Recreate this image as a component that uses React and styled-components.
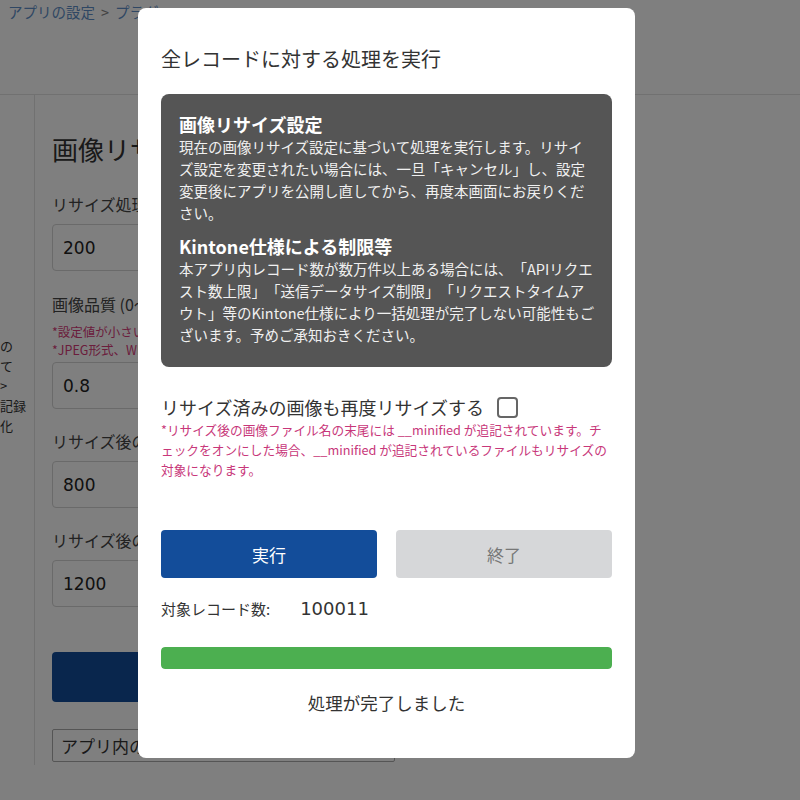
import React from 'react'
import styled, { createGlobalStyle } from 'styled-components'

const GlobalStyle = createGlobalStyle`
  body {
    margin: 0;
    font-family: "Noto Sans CJK JP", "Noto Sans", sans-serif;
    color: #333;
  }
  * {
    text-spacing-trim: space-all;
  }
`

const Page = styled.div`
  width: 800px;
  min-height: 800px;
  background: #fff;
  overflow: hidden;
`

const Header = styled.div`
  height: 95px;
  box-sizing: border-box;
  padding: 0 8px;
  border-bottom: 1px solid #e3e3e3;
`

const Breadcrumb = styled.div`
  font-size: 14.5px;
  line-height: 24px;
  color: #5f8fc8;
  white-space: nowrap;
  > span {
    color: #888;
    margin: 0 6px;
  }
`

const Body = styled.div`
  display: flex;
`

const Sidebar = styled.div`
  width: 35px;
  flex-shrink: 0;
  box-sizing: border-box;
  padding-top: 241px;
  min-height: 670px;
  border-right: 1px solid #e3e3e3;
  overflow: hidden;
  font-size: 13px;
  line-height: 20px;
  white-space: nowrap;
`

const Main = styled.div`
  width: 360px;
  padding: 36px 0 0 17px;
`

/* the modal hides everything right of x=138, so texts are clipped there */
const Clip = styled.div`
  width: 90px;
  overflow: hidden;
  white-space: nowrap;
`

const PageTitle = styled(Clip)`
  font-size: 26px;
  line-height: 36px;
`

const FieldLabel = styled(Clip)`
  margin-top: ${p => p.$gap}px;
  font-size: 16px;
  line-height: 24px;
  color: #444;
`

const PageNote = styled(Clip)`
  margin-top: ${p => p.$gap || 0}px;
  font-size: 12.5px;
  line-height: 18px;
  color: #d63a78;
`

const Input = styled.div`
  margin-top: ${p => p.$gap}px;
  height: 47px;
  width: 340px;
  box-sizing: border-box;
  border: 1px solid #d4d4d4;
  border-radius: 4px;
  padding-left: 10px;
  display: flex;
  align-items: center;
  font-family: "DejaVu Sans", sans-serif;
  font-size: 17px;
  color: #222;
`

const PageButton = styled.div`
  margin-top: 45px;
  height: 50px;
  width: 340px;
  border-radius: 4px;
  background: #134d9a;
`

const Select = styled.div`
  margin-top: 27px;
  height: 33px;
  width: 343px;
  box-sizing: border-box;
  border: 1px solid #aaa;
  border-radius: 2px;
  padding-left: 8px;
  font-size: 17px;
  line-height: 31px;
  white-space: nowrap;
  > span {
    display: block;
    width: 78px;
    overflow: hidden;
  }
`

const Overlay = styled.div`
  position: fixed;
  inset: 0;
  background: rgba(0, 0, 0, 0.5);
`

const Modal = styled.div`
  margin: 8px 0 0 138px;
  width: 497px;
  height: 750px;
  box-sizing: border-box;
  padding: 36px 23px 0;
  background: #fff;
  border-radius: 8px;
`

const ModalTitle = styled.h2`
  margin: 0;
  font-size: 20px;
  font-weight: normal;
  line-height: 30px;
  color: #333;
`

const InfoBox = styled.div`
  margin-top: 20px;
  background: #555;
  border-radius: 8px;
  padding: 18px 18px 21px;
  color: #f0f0f0;
`

const InfoHeading = styled.h3`
  margin: ${p => (p.$first ? 0 : '10px')} 0 0;
  font-size: 18px;
  line-height: 24px;
  font-weight: bold;
  color: #fff;
`

const InfoText = styled.p`
  margin: 0;
  font-size: 14.5px;
  line-height: 22px;
  white-space: nowrap;
`

const CheckRow = styled.label`
  margin-top: 27px;
  display: flex;
  align-items: center;
  font-size: 18px;
  line-height: 26px;
  color: #333;
`

const CheckBox = styled.span`
  margin-left: 13px;
  width: 17px;
  height: 17px;
  border: 2px solid #666;
  border-radius: 4px;
`

const Note = styled.p`
  margin: 0;
  font-size: 12.7px;
  line-height: 20px;
  color: #c8377a;
  white-space: nowrap;
`

const ButtonRow = styled.div`
  margin-top: 50px;
  display: flex;
  gap: 19px;
`

const Button = styled.button`
  flex: 1;
  height: 48px;
  border: none;
  border-radius: 4px;
  font-family: inherit;
  font-size: 17px;
  background: ${p => (p.$primary ? '#134d9a' : '#d6d7d9')};
  color: ${p => (p.$primary ? '#fff' : '#777')};
`

const Count = styled.div`
  margin-top: 19px;
  font-size: 15px;
  line-height: 24px;
  color: #333;
`

const Num = styled.span`
  margin-left: 30px;
  font-family: "DejaVu Sans", sans-serif;
  font-size: 18px;
`

const Progress = styled.div`
  margin-top: 26px;
  height: 22px;
  border-radius: 4px;
  background: #e8e8e8;
  overflow: hidden;
`

const ProgressFill = styled.div`
  height: 100%;
  background: #4caf50;
  border-radius: 4px;
`

const Done = styled.div`
  margin-top: 21px;
  text-align: center;
  font-size: 17.5px;
  line-height: 26px;
  color: #333;
`

export default function App() {
  const progress = 100

  return (
    <>
      <GlobalStyle />
      <Page>
        <Header>
          <Breadcrumb>
            アプリの設定<span>&gt;</span>プラグ
          </Breadcrumb>
        </Header>
        <Body>
          <Sidebar>
            <div>の</div>
            <div>て</div>
            <div>&gt;</div>
            <div>記録</div>
            <div>化</div>
          </Sidebar>
          <Main>
            <PageTitle>画像リサイズ設定</PageTitle>
            <FieldLabel $gap={25}>リサイズ処理を行うファイルサイズ (KB)</FieldLabel>
            <Input $gap={8}>200</Input>
            <FieldLabel $gap={21}>画像品質 (0〜1)</FieldLabel>
            <PageNote $gap={7}>*設定値が小さいほどファイルサイズは小さくなります</PageNote>
            <PageNote>*JPEG形式、WEBP形式のみ有効です</PageNote>
            <Input $gap={3}>0.8</Input>
            <FieldLabel $gap={20}>リサイズ後の最大幅 (px)</FieldLabel>
            <Input $gap={8}>800</Input>
            <FieldLabel $gap={20}>リサイズ後の最大高さ (px)</FieldLabel>
            <Input $gap={8}>1200</Input>
            <PageButton />
            <Select><span>アプリ内の全レコードに対して実行</span></Select>
          </Main>
        </Body>
      </Page>
      <Overlay>
        <Modal>
          <ModalTitle>全レコードに対する処理を実行</ModalTitle>
          <InfoBox>
            <InfoHeading $first>画像リサイズ設定</InfoHeading>
            <InfoText>
              現在の画像リサイズ設定に基づいて処理を実行します。リサイ<br />
              ズ設定を変更されたい場合には、一旦「キャンセル」し、設定<br />
              変更後にアプリを公開し直してから、再度本画面にお戻りくだ<br />
              さい。
            </InfoText>
            <InfoHeading>Kintone仕様による制限等</InfoHeading>
            <InfoText>
              本アプリ内レコード数が数万件以上ある場合には、「APIリクエ<br />
              スト数上限」「送信データサイズ制限」「リクエストタイムア<br />
              ウト」等のKintone仕様により一括処理が完了しない可能性もご<br />
              ざいます。予めご承知おきください。
            </InfoText>
          </InfoBox>
          <CheckRow>
            リサイズ済みの画像も再度リサイズする
            <CheckBox />
          </CheckRow>
          <Note>
            *リサイズ後の画像ファイル名の末尾には __minified が追記されています。チ<br />
            ェックをオンにした場合、__minified が追記されているファイルもリサイズの<br />
            対象になります。
          </Note>
          <ButtonRow>
            <Button $primary>実行</Button>
            <Button>終了</Button>
          </ButtonRow>
          <Count>
            対象レコード数:<Num>100011</Num>
          </Count>
          <Progress>
            <ProgressFill style={{ width: `${progress}%` }} />
          </Progress>
          <Done>処理が完了しました</Done>
        </Modal>
      </Overlay>
    </>
  )
}
